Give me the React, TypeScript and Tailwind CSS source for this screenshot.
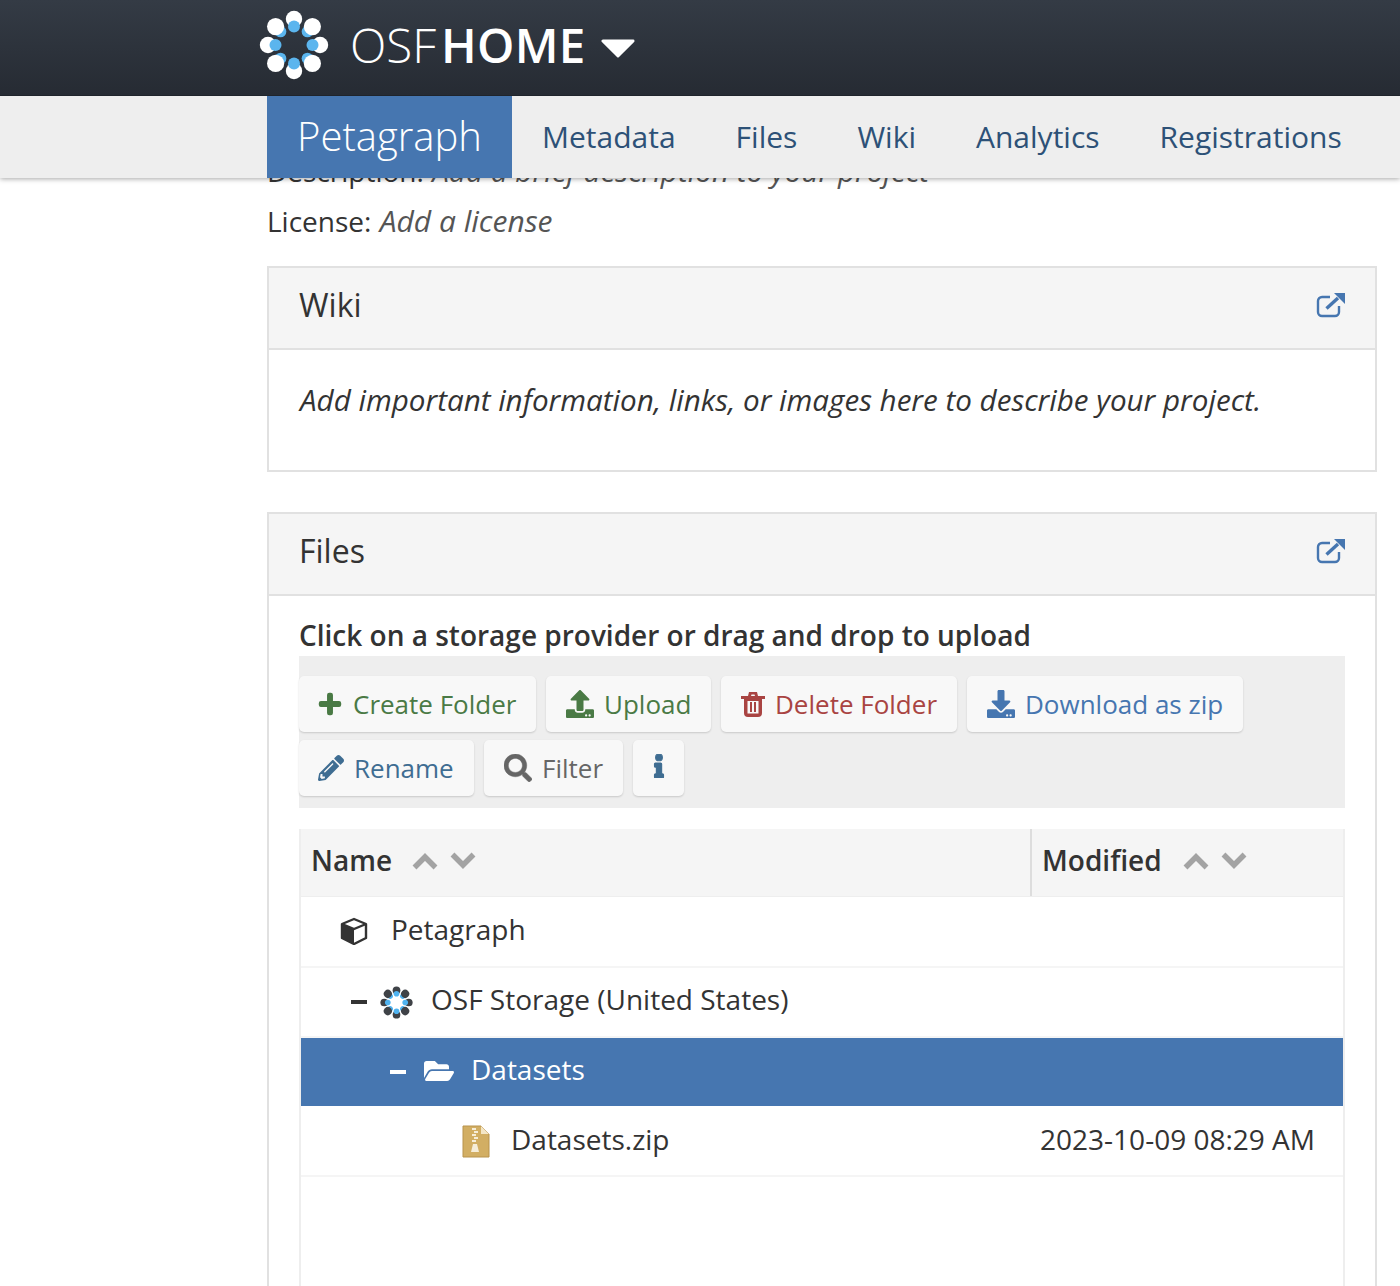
import { FaPlus, FaUpload, FaDownload, FaPencilAlt, FaSearch, FaInfo, FaFolderOpen } from 'react-icons/fa';
import type { ReactNode } from 'react';

function OsfLogo({ size, outer, inner }: { size: number; outer: string; inner: string }) {
  const straight = [0, 90, 180, 270];
  const diagonal = [45, 135, 225, 315];
  return (
    <svg width={size} height={size} viewBox="0 0 70 70">
      {diagonal.map((a) => (
        <circle key={a} cx="35" cy="16" r="5.8" fill={inner} transform={`rotate(${a} 35 35)`} />
      ))}
      {diagonal.map((a) => (
        <circle key={a} cx="35" cy="9" r="8.6" fill={outer} transform={`rotate(${a} 35 35)`} />
      ))}
      {straight.map((a) => (
        <circle key={a} cx="35" cy="9" r="8.2" fill={outer} transform={`rotate(${a} 35 35)`} />
      ))}
      {straight.map((a) => (
        <circle key={a} cx="35" cy="16.5" r="6" fill={inner} transform={`rotate(${a} 35 35)`} />
      ))}
    </svg>
  );
}

function ExternalLink() {
  return (
    <svg width="30" height="26" viewBox="0 0 30 26" fill="none" className="text-[#4676b0]">
      <path d="M14 5H6a4 4 0 0 0-4 4v11a4 4 0 0 0 4 4h13a4 4 0 0 0 4-4v-6" stroke="currentColor" strokeWidth="2.4" />
      <path d="M10.5 16.5 22 6" stroke="currentColor" strokeWidth="3.4" />
      <path d="M18 1h11v11z" fill="currentColor" />
    </svg>
  );
}

function ZipIcon() {
  return (
    <svg width="28" height="34" viewBox="0 0 28 34">
      <path d="M1 2h18l8 8v23H1z" fill="#d2ae63" stroke="#b8934c" />
      <path d="M19 2v8h8z" fill="#f4e6c6" />
      <path d="M10 4h4v2h-4zM12 7h4v2h-4zM10 10h4v2h-4zM12 13h4v2h-4zM10 16h4v2h-4zM11 20h4l2 8h-8z" fill="#f6edd8" />
    </svg>
  );
}

function Trash() {
  return (
    <svg width="24" height="26" viewBox="0 0 24 26" className="mr-[10px]">
      <path d="M0 5h24v3H0zM8 1h8l1 4h-3l-.5-1.5h-3L10 5H7z" fill="currentColor" />
      <path fillRule="evenodd" d="M3 7h18v15a4 4 0 0 1-4 4H7a4 4 0 0 1-4-4zm3.5 3v12.5h11V10zM9 11h2v10H9zm4 0h2v10h-2z" fill="currentColor" />
    </svg>
  );
}

function Cube() {
  return (
    <svg width="28" height="28" viewBox="0 0 28 28" className="mr-[23px] -mt-[2px]">
      <path d="M14 2 26 7v14l-12 6-12-6V7z" fill="none" stroke="#333" strokeWidth="2.4" strokeLinejoin="round" />
      <path d="M2 7l12 5v15L2 21z" fill="#333" />
      <path d="M2 7l12 5 12-5" fill="none" stroke="#333" strokeWidth="2.4" />
    </svg>
  );
}

function ToolButton({ icon, label, color, className }: { icon: ReactNode; label?: string; color: string; className: string }) {
  return (
    <button className={`h-[56px] flex items-center rounded-[5px] bg-[#f8f8f8] shadow-[0_1px_2px_rgba(0,0,0,0.16)] text-[26px] ${color} ${className}`}>
      {icon}
      {label}
    </button>
  );
}

function Panel({ title, children }: { title: string; children: ReactNode }) {
  return (
    <section className="border-2 border-[#e1e1e1]">
      <div className="h-[82px] bg-[#f5f5f5] border-b-2 border-[#e1e1e1] flex items-center justify-between pl-[30px] pr-[29px] pb-[6px]">
        <h3 className="text-[32px] text-[#333]">{title}</h3>
        <ExternalLink />
      </div>
      {children}
    </section>
  );
}

function SortArrows() {
  return (
    <span className="flex items-center gap-[12px] text-[#a3a3a3] pt-[3px]">
      <svg width="26" height="18" viewBox="0 0 26 18" fill="none" stroke="currentColor" strokeWidth="5.5">
        <path d="M2.5 15.5 13 5l10.5 10.5" />
      </svg>
      <svg width="26" height="18" viewBox="0 0 26 18" fill="none" stroke="currentColor" strokeWidth="5.5">
        <path d="M2.5 2.5 13 13 23.5 2.5" />
      </svg>
    </span>
  );
}

export default function App() {
  return (
    <div className="h-[1286px] overflow-hidden bg-white font-['Open_Sans',sans-serif] text-[#333]">
      <header className="relative z-20 h-[96px] bg-gradient-to-b from-[#343b45] to-[#262b33] border-b border-[#1f242b] pl-[259px] pb-[6px] flex items-center">
        <OsfLogo size={70} outer="#ffffff" inner="#5bb5ee" />
        <a className="ml-[21px] text-[47.5px] text-white font-light">OSF</a>
        <a className="ml-[5px] text-[47.5px] text-white font-semibold tracking-[0.3px]">HOME</a>
        <svg width="34" height="19" viewBox="0 0 36 20" className="ml-[15px] mt-[7px]">
          <path d="M2 2h32L18 18z" fill="#fff" stroke="#fff" strokeWidth="3" strokeLinejoin="round" />
        </svg>
      </header>
      <nav className="relative z-10 h-[82px] bg-[#eeeeee] shadow-[0_1px_5px_rgba(0,0,0,0.35)] pl-[267px] flex items-start text-[#2d5177] text-[30px]">
        <a className="h-[82px] w-[245px] pb-[2px] bg-[#4676b0] text-white text-[40px] font-light flex items-center justify-center">Petagraph</a>
        <a className="h-[82px] pb-[2px] ml-[30px] flex items-center">Metadata</a>
        <a className="h-[82px] pb-[2px] ml-[60px] flex items-center">Files</a>
        <a className="h-[82px] pb-[2px] ml-[60px] flex items-center">Wiki</a>
        <a className="h-[82px] pb-[2px] ml-[60px] flex items-center">Analytics</a>
        <a className="h-[82px] pb-[2px] ml-[60px] flex items-center">Registrations</a>
      </nav>
      <main className="ml-[267px] w-[1110px] -mt-[29px]">
        <p className="h-[50px] text-[28px] leading-[44px] whitespace-nowrap">Description: <em className="text-[#555] text-[29.7px] ml-[1px]">Add a brief description to your project</em></p>
        <p className="h-[44px] text-[28px] leading-[44px]">License: <em className="text-[#555] text-[30px] ml-[1px]">Add a license</em></p>
        <div className="h-[23px]" />
        <Panel title="Wiki">
          <div className="h-[120px] pl-[31px] pr-[29px] pt-[27px] text-[29.6px] italic leading-[46px] whitespace-nowrap">Add important information, links, or images here to describe your project.</div>
        </Panel>
        <div className="h-[40px]" />
        <Panel title="Files">
          <div className="px-[30px] pt-[20px] h-[800px]">
            <p className="h-[40px] text-[28px] font-semibold leading-[38px]">Click on a storage provider or drag and drop to upload</p>
            <div className="bg-[#eeeeee] h-[152px] pt-[20px] flex flex-wrap content-start gap-x-[10px] gap-y-[8px]">
              <ToolButton className="w-[237px] pl-[19px]" color="text-[#4a7a45]" icon={<FaPlus className="text-[24px] mr-[11px]" stroke="currentColor" strokeWidth={30} />} label="Create Folder" />
              <ToolButton className="w-[165px] pl-[20px]" color="text-[#4a7a45]" icon={<FaUpload className="text-[28px] mr-[10px]" />} label="Upload" />
              <ToolButton className="w-[236px] pl-[20px]" color="text-[#a94442]" icon={<Trash />} label="Delete Folder" />
              <ToolButton className="w-[276px] pl-[20px]" color="text-[#4676b0]" icon={<FaDownload className="text-[28px] mr-[10px]" />} label="Download as zip" />
              <ToolButton className="w-[175px] pl-[19px]" color="text-[#3f6d92]" icon={<FaPencilAlt className="text-[26px] mr-[10px]" />} label="Rename" />
              <ToolButton className="w-[139px] pl-[20px]" color="text-[#666]" icon={<FaSearch className="text-[28px] mr-[10px]" stroke="currentColor" strokeWidth={8} />} label="Filter" />
              <ToolButton className="w-[51px] justify-center pb-[4px]" color="text-[#3f6d92]" icon={<FaInfo className="text-[24px]" stroke="currentColor" strokeWidth={24} />} />
            </div>
            <div className="mt-[21px] border-x-2 border-[#eeeeee] h-[520px]">
              <div className="h-[68px] bg-[#f5f5f5] flex border-b border-[#eeeeee] text-[28px] font-semibold">
                <div className="w-[731px] border-r-2 border-[#dddddd] pl-[10px] pb-[6px] flex items-center gap-[20px]">Name <SortArrows /></div>
                <div className="flex-1 pl-[10px] pb-[6px] flex items-center gap-[21px]">Modified <SortArrows /></div>
              </div>
              <div className="h-[71px] flex items-center border-b-2 border-[#f5f5f5] text-[28px] pl-[39px]">
                <Cube />
                <span className="-mt-[5px]">Petagraph</span>
              </div>
              <div className="h-[70px] flex items-center border-b-2 border-[#f5f5f5] text-[28px] pl-[50px]">
                <span className="w-[16px] h-[4px] bg-[#333] mr-[13px]" />
                <OsfLogo size={33} outer="#3f4247" inner="#4fb3f0" />
                <span className="ml-[18px] -mt-[7px]">OSF Storage (United States)</span>
              </div>
              <div className="h-[68px] flex items-center bg-[#4676b0] text-white text-[28px] pl-[89px]">
                <span className="w-[16px] h-[4px] bg-white mr-[18px]" />
                <FaFolderOpen className="text-[30px] mr-[17px] -mt-[2px]" />
                <span className="-mt-[7px]">Datasets</span>
              </div>
              <div className="h-[71px] flex items-center border-b-2 border-[#f5f5f5] text-[28px] pl-[161px] pr-[28px]">
                <ZipIcon />
                <span className="ml-[21px] -mt-[3px]">Datasets.zip</span>
                <span className="ml-auto -mt-[3px]">2023-10-09 08:29 AM</span>
              </div>
            </div>
          </div>
        </Panel>
      </main>
    </div>
  );
}
